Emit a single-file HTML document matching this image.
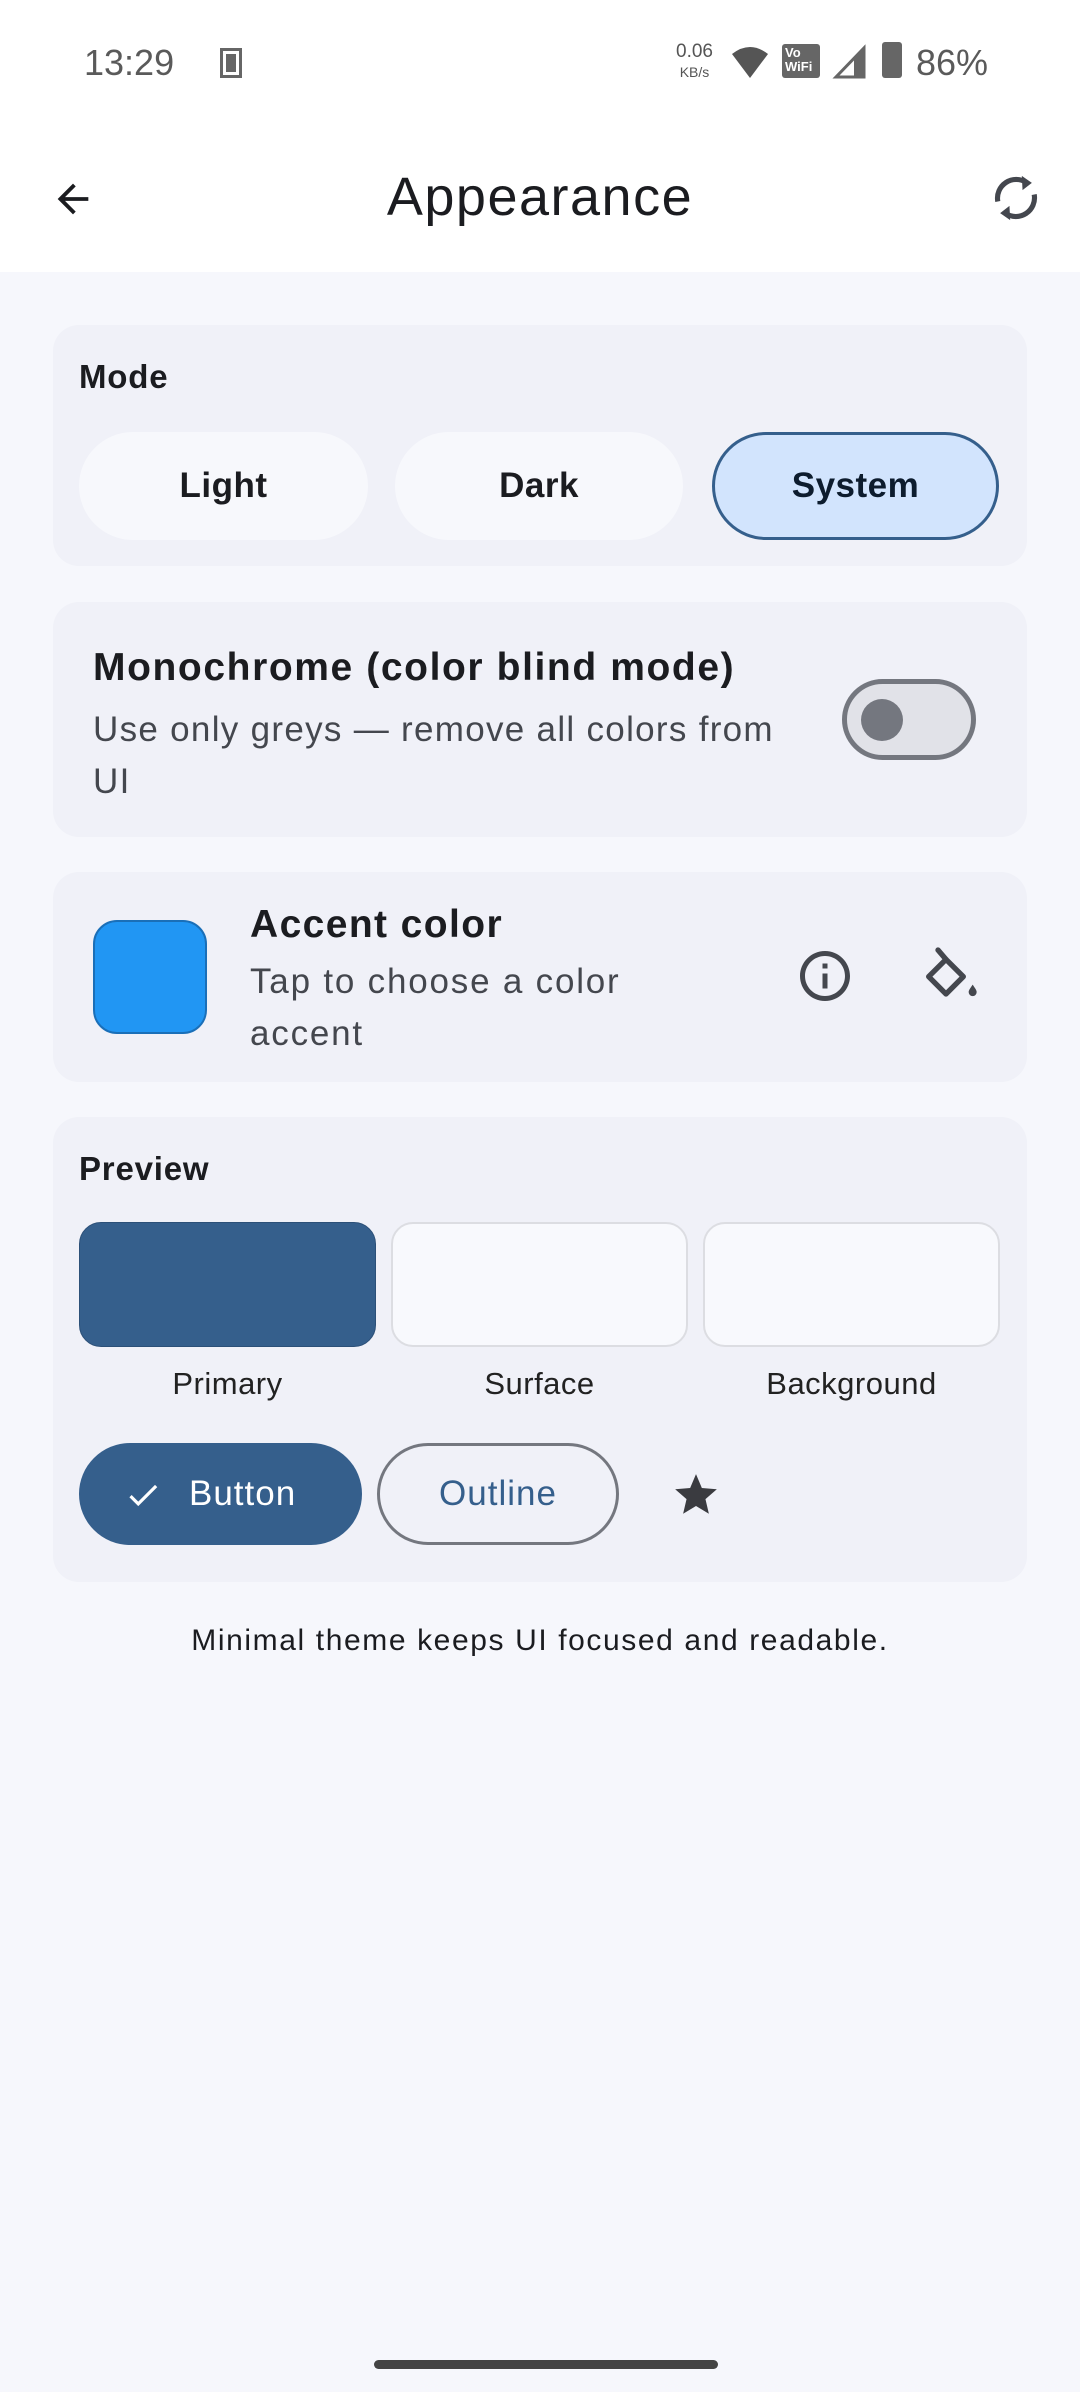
<!DOCTYPE html>
<html><head><meta charset="utf-8"><style>
*{margin:0;padding:0;box-sizing:border-box}
body{width:1080px;height:2392px;background:#f6f7fc;font-family:"Liberation Sans",sans-serif;position:relative;overflow:hidden;color:#1b1c20}
.abs{position:absolute}
.top{position:absolute;left:0;top:0;width:1080px;height:272px;background:#fff}
.card{position:absolute;left:53px;width:974px;background:#f0f1f8;border-radius:26px}
.t{position:absolute;white-space:nowrap}
.seg{position:absolute;top:432px;height:108px;border-radius:54px;background:#f7f8fc;font-weight:bold;font-size:35px;letter-spacing:0.5px;display:flex;align-items:center;justify-content:center}
.sw{position:absolute;top:1222px;height:125px;width:297px;border-radius:22px}
.lbl{position:absolute;top:1366px;font-size:31px;letter-spacing:0.5px;width:297px;text-align:center;color:#222}
</style></head><body>
<div class="top"></div>
<div class="t" style="left:84px;top:42px;font-size:36px;color:#5a5a5a">13:29</div>
<div class="abs" style="left:220px;top:48px;width:22px;height:30px;border:3px solid #666;background:#fff"><div style="margin:3px;height:18px;background:#666"></div></div>
<div class="t" style="left:676px;top:42px;font-size:19px;color:#555;line-height:20px;text-align:center">0.06<br><span style="font-size:14px">KB/s</span></div>
<svg class="abs" style="left:730px;top:44px" width="40" height="36" viewBox="0 0 40 36"><path d="M2 10 Q20 -4 38 10 L20 34 Z" fill="#555"/></svg>
<div class="abs" style="left:782px;top:44px;width:38px;height:34px;background:#666;border-radius:3px;color:#fff;font-size:13px;font-weight:bold;line-height:14px;padding:2px 3px">Vo<br>WiFi</div>
<svg class="abs" style="left:832px;top:44px" width="34" height="36"><path d="M32 4 L32 33 L4 33 Z" fill="none" stroke="#666" stroke-width="3"/><path d="M32 4 L32 33 L22 33 L22 14 Z" fill="#666"/></svg>
<div class="abs" style="left:882px;top:42px;width:20px;height:36px;background:#666;border-radius:3px"></div>
<div class="t" style="left:916px;top:42px;font-size:36px;color:#5a5a5a">86%</div>

<svg class="abs" style="left:50px;top:176px" width="46" height="46" viewBox="0 0 24 24"><path d="M20 11H7.83l5.59-5.59L12 4l-8 8 8 8 1.41-1.41L7.83 13H20v-2z" fill="#1b1c20"/></svg>
<div class="t" style="left:0;width:1080px;text-align:center;top:166px;font-size:54px;letter-spacing:1.5px;color:#1b1c20">Appearance</div>
<svg class="abs" style="left:988px;top:170px" width="56" height="56" viewBox="0 0 24 24" fill="none" stroke="#44474e" stroke-width="2.2"><path d="M16.5 5.4 A8 8 0 0 0 4.2 13.5"/><path d="M7.5 18.6 A8 8 0 0 0 19.8 10.5"/><path d="M14.5 2.5 L18.8 5.5 L14.8 8.6 Z" fill="#44474e" stroke="none"/><path d="M9.5 21.5 L5.2 18.5 L9.2 15.4 Z" fill="#44474e" stroke="none"/></svg>

<div class="card" style="top:325px;height:241px"></div>
<div class="t" style="left:79px;top:358px;font-size:33px;font-weight:bold;letter-spacing:0.8px">Mode</div>
<div class="seg" style="left:79px;width:289px">Light</div>
<div class="seg" style="left:395px;width:288px">Dark</div>
<div class="seg" style="left:712px;width:287px;background:#d2e4fd;border:3px solid #355f8c;color:#0d1c2e">System</div>

<div class="card" style="top:602px;height:235px"></div>
<div class="t" style="left:93px;top:646px;font-size:39px;font-weight:bold;letter-spacing:1.6px">Monochrome (color blind mode)</div>
<div class="t" style="left:93px;top:704px;font-size:35px;letter-spacing:1.3px;color:#44474e;line-height:52px">Use only greys — remove all colors from<br>UI</div>
<div class="abs" style="left:842px;top:679px;width:134px;height:81px;border-radius:41px;border:5px solid #74777f;background:#e1e2e8"></div>
<div class="abs" style="left:861px;top:699px;width:42px;height:42px;border-radius:50%;background:#74777f"></div>

<div class="card" style="top:872px;height:210px"></div>
<div class="abs" style="left:93px;top:920px;width:114px;height:114px;border-radius:24px;background:#2196f3;border:2px solid #1a6fb8"></div>
<div class="t" style="left:250px;top:903px;font-size:39px;font-weight:bold;letter-spacing:1.4px">Accent color</div>
<div class="t" style="left:250px;top:956px;font-size:35px;letter-spacing:1.8px;color:#44474e;line-height:52px">Tap to choose a color<br>accent</div>
<svg class="abs" style="left:795px;top:946px" width="60" height="60" viewBox="0 0 24 24"><path d="M11 7h2v2h-2zm0 4h2v6h-2zm1-9C6.48 2 2 6.48 2 12s4.48 10 10 10 10-4.48 10-10S17.52 2 12 2zm0 18c-4.41 0-8-3.59-8-8s3.59-8 8-8 8 3.59 8 8-3.59 8-8 8z" fill="#44474e"/></svg>
<svg class="abs" style="left:918px;top:946px" width="64" height="64" viewBox="0 0 24 24"><path d="M10.5 5 L17 11.5 L10.5 18 L4 11.5 Z" fill="none" stroke="#44474e" stroke-width="2" stroke-linejoin="round"/><path d="M7.5 1.5 L10.5 5" stroke="#44474e" stroke-width="2" stroke-linecap="round"/><path d="M20.5 14.5 C19.5 16 19 16.6 19 17.3 a1.5 1.5 0 0 0 3 0 C22 16.6 21.5 16 20.5 14.5z" fill="#44474e"/></svg>

<div class="card" style="top:1117px;height:465px"></div>
<div class="t" style="left:79px;top:1150px;font-size:33px;font-weight:bold;letter-spacing:0.8px">Preview</div>
<div class="sw" style="left:79px;background:#355f8c;border:1px solid #2c5078"></div>
<div class="sw" style="left:391px;background:#f8f9fd;border:2px solid #dcdde2"></div>
<div class="sw" style="left:703px;background:#f8f9fd;border:2px solid #dcdde2"></div>
<div class="lbl" style="left:79px">Primary</div>
<div class="lbl" style="left:391px">Surface</div>
<div class="lbl" style="left:703px">Background</div>
<div class="abs" style="left:79px;top:1443px;width:283px;height:102px;border-radius:51px;background:#355f8c"></div>
<svg class="abs" style="left:124px;top:1476px" width="38" height="38" viewBox="0 0 24 24"><path d="M9 16.17L4.83 12l-1.42 1.41L9 19 21 7l-1.41-1.41z" fill="#fff"/></svg>
<div class="t" style="left:189px;top:1474px;font-size:35px;letter-spacing:1px;color:#fff">Button</div>
<div class="abs" style="left:377px;top:1443px;width:242px;height:102px;border-radius:51px;border:3px solid #74777f"></div>
<div class="t" style="left:377px;width:242px;text-align:center;top:1474px;font-size:35px;letter-spacing:1px;color:#355f8c">Outline</div>
<svg class="abs" style="left:671px;top:1470px" width="50" height="50" viewBox="0 0 24 24"><path d="M12 17.27L18.18 21l-1.64-7.03L22 9.24l-7.19-.61L12 2 9.19 8.63 2 9.24l5.46 4.73L5.82 21z" fill="#3a3b40"/></svg>

<div class="t" style="left:0;width:1080px;text-align:center;top:1624px;font-size:30px;letter-spacing:1.6px;color:#1b1c20">Minimal theme keeps UI focused and readable.</div>
<div class="abs" style="left:374px;top:2360px;width:344px;height:9px;border-radius:5px;background:#444"></div>
</body></html>
